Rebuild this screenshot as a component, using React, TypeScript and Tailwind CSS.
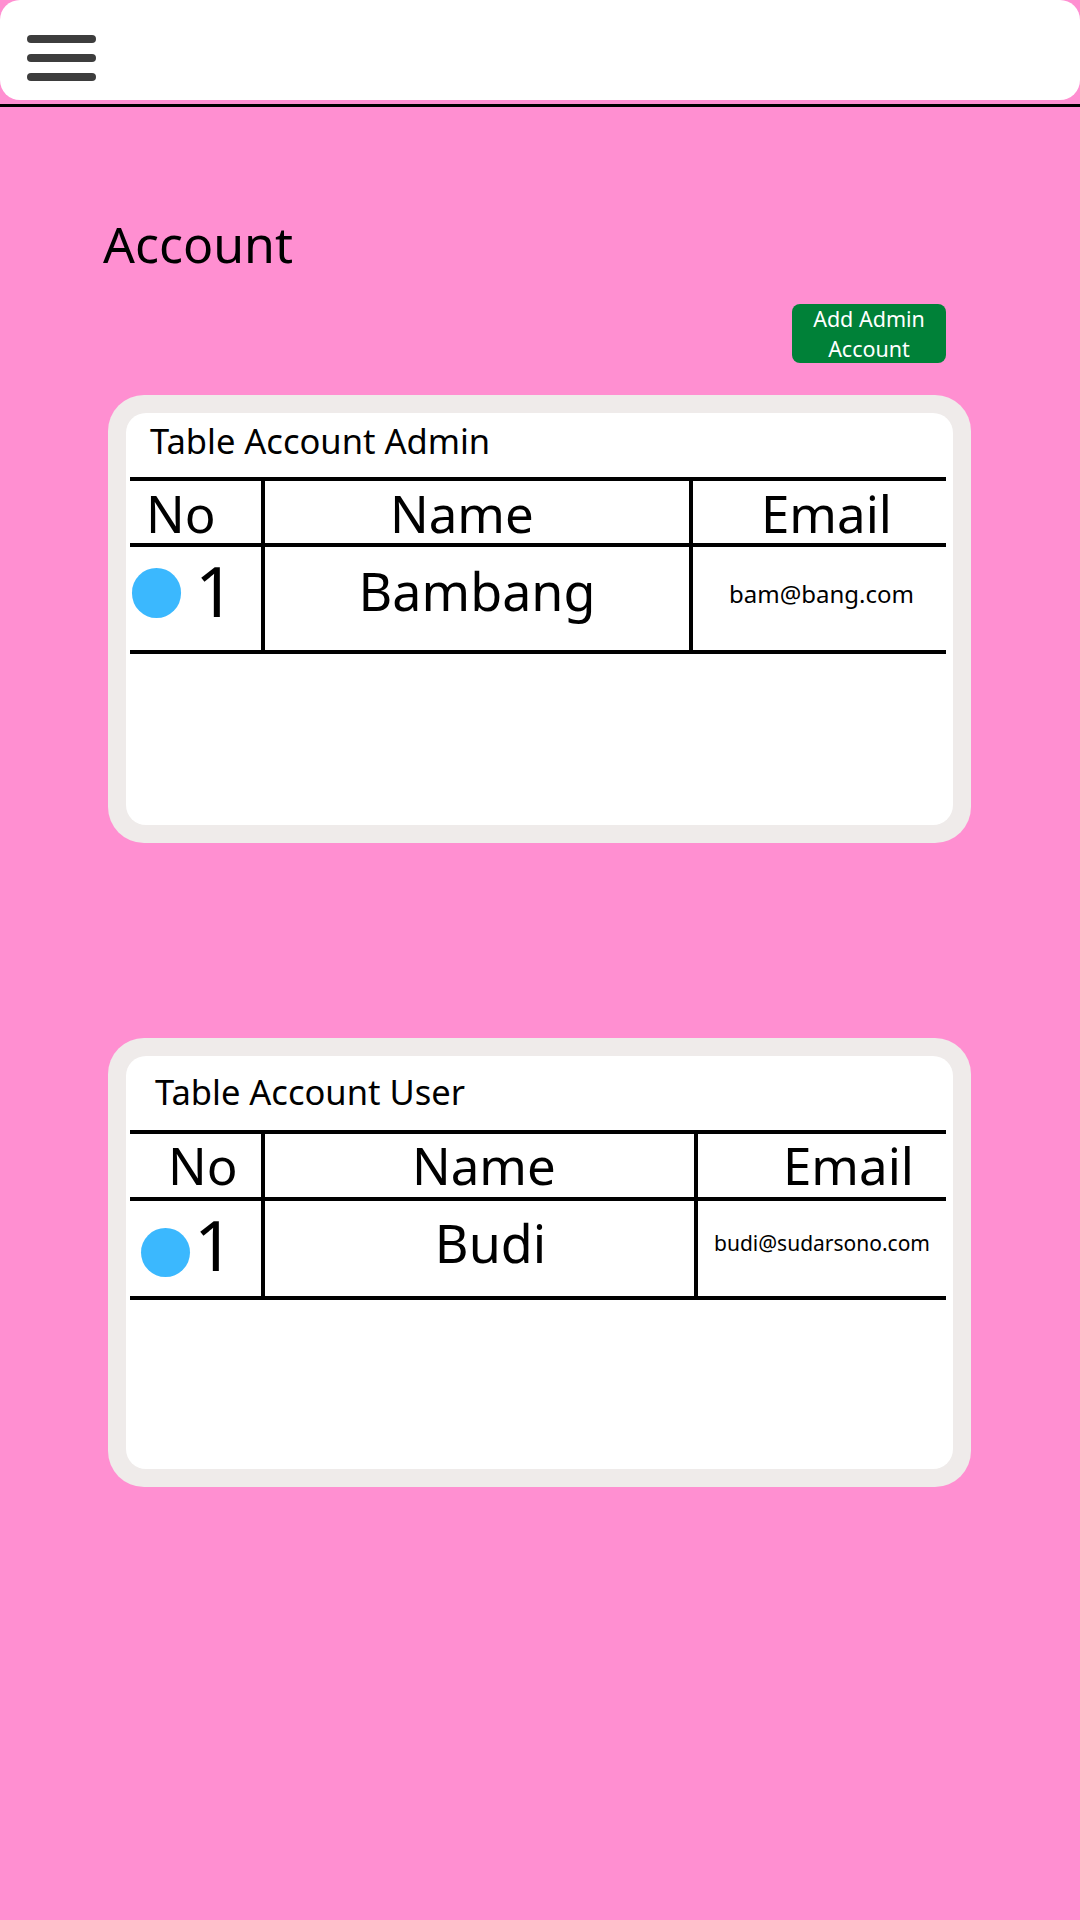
import React from "react";

type CardProps = {
  cardMt: string;
  cardH: string;
  title: string;
  titleCls: string;
  c1: string;
  c2: string;
  headerH: string;
  bodyH: string;
  noCls: string;
  nameHCls: string;
  emailHCls: string;
  dotCls: string;
  oneCls: string;
  nameVal: string;
  nameValCls: string;
  email: string;
  emailCls: string;
};

function TableCard(p: CardProps) {
  return (
    <div className={`${p.cardMt} ${p.cardH} ml-[108px] w-[863px] rounded-[36px] bg-[#efebea] p-[18px]`}>
      <div className="flex h-full flex-col rounded-[20px] bg-white">
        <div className={`${p.titleCls} text-[34.5px] leading-none text-black`}>{p.title}</div>
        <div className="ml-[4px] w-[816px] border-y-4 border-black">
          <div className={`flex ${p.headerH} border-b-4 border-black text-[51px] leading-none`}>
            <div className={`${p.c1} border-r-4 border-black ${p.noCls}`}>No</div>
            <div className={`${p.c2} border-r-4 border-black ${p.nameHCls}`}>Name</div>
            <div className={`flex-1 ${p.emailHCls}`}>Email</div>
          </div>
          <div className={`flex ${p.bodyH}`}>
            <div className={`${p.c1} flex items-start border-r-4 border-black`}>
              <div className={`${p.dotCls} shrink-0 rounded-full bg-[#3bb8fe]`} />
              <div className={`${p.oneCls} text-[70px] leading-none`}>1</div>
            </div>
            <div className={`${p.c2} flex justify-center border-r-4 border-black leading-none ${p.nameValCls}`}>
              {p.nameVal}
            </div>
            <div className={`flex flex-1 justify-center leading-none ${p.emailCls}`}>{p.email}</div>
          </div>
        </div>
      </div>
    </div>
  );
}

export default function App() {
  return (
    <div className="min-h-[1920px] w-[1080px] bg-[#ff8fd1] font-['Noto_Sans',sans-serif] text-black">
      <header className="flex h-[100px] items-start rounded-[20px] bg-white">
        <div className="ml-[27px] mt-[35px] flex flex-col gap-[11px]">
          <div className="h-[8px] w-[69px] rounded-full bg-[#3d3d3d]" />
          <div className="h-[8px] w-[69px] rounded-full bg-[#3d3d3d]" />
          <div className="h-[8px] w-[69px] rounded-full bg-[#3d3d3d]" />
        </div>
      </header>
      <div className="mt-[4px] h-[3px] w-full bg-black" />

      <div className="mt-[112px] pl-[103px] text-[50px] leading-none">Account</div>

      <div className="mt-[35px] flex justify-end pr-[134px]">
        <button className="flex h-[59px] w-[154px] flex-col items-center justify-center rounded-[8px] bg-[#008138] text-[21.5px] leading-[30px] text-white">
          <span>Add Admin</span>
          <span>Account</span>
        </button>
      </div>

      <TableCard
        cardMt="mt-[32px]"
        cardH="h-[448px]"
        title="Table Account Admin"
        titleCls="h-[64px] pt-[11px] pl-[24px]"
        c1="w-[135px]"
        c2="w-[428px]"
        headerH="h-[66px]"
        bodyH="h-[103px]"
        noCls="pt-[7px] pl-[16px]"
        nameHCls="pt-[7px] pl-[125px]"
        emailHCls="pt-[7px] pl-[68px]"
        dotCls="mt-[21px] ml-[2px] w-[49px] h-[50px]"
        oneCls="mt-[8px] ml-[14px]"
        nameVal="Bambang"
        nameValCls="pt-[18px] text-[52px]"
        email="bam@bang.com"
        emailCls="pt-[35px] pl-[4px] text-[24px]"
      />

      <TableCard
        cardMt="mt-[195px]"
        cardH="h-[449px]"
        title="Table Account User"
        titleCls="h-[74px] pt-[19px] pl-[29px]"
        c1="w-[135px]"
        c2="w-[433px]"
        headerH="h-[67px]"
        bodyH="h-[95px]"
        noCls="pt-[6px] pl-[38px]"
        nameHCls="pt-[6px] pl-[147px]"
        emailHCls="pt-[6px] pl-[85px]"
        dotCls="mt-[27px] ml-[11px] w-[49px] h-[49px]"
        oneCls="mt-[8px] ml-[4px]"
        nameVal="Budi"
        nameValCls="pt-[16px] pl-[22px] text-[52px]"
        email="budi@sudarsono.com"
        emailCls="pt-[32px] text-[21px]"
      />
    </div>
  );
}
